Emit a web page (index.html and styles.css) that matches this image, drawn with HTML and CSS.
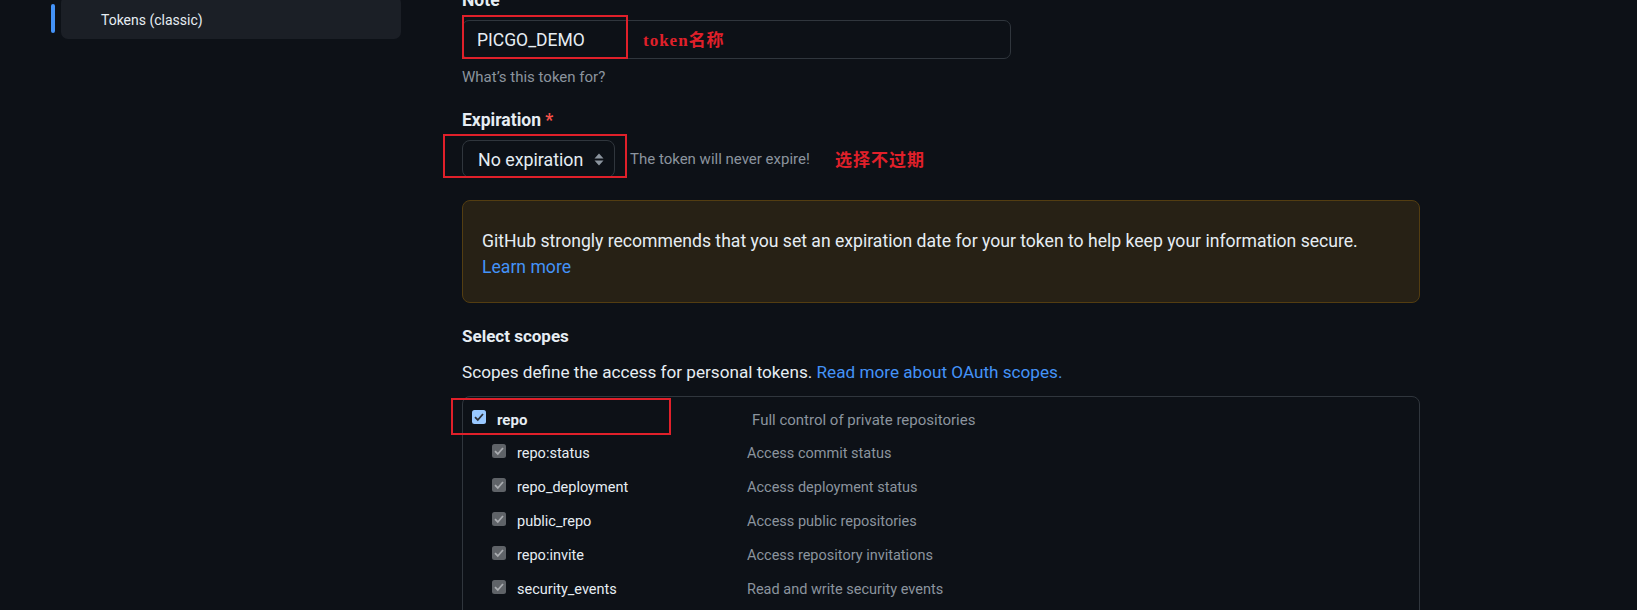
FILE: index.html
```html
<!DOCTYPE html>
<html lang="en">
<head>
<meta charset="utf-8">
<title>New personal access token (classic)</title>
<link rel="stylesheet" href="styles.css">
</head>
<body>
<div class="page">
  <aside class="sidebar">
    <div class="nav-row">
      <span class="nav-indicator"></span>
      <a class="nav-item">Tokens (classic)</a>
    </div>
  </aside>

  <main class="main">
    <div class="field">
      <label class="label">Note</label>
      <div class="input-row">
        <div class="text-input">PICGO_DEMO</div>
        <span class="annot-box box-note"></span>
        <span class="annot-text text-note"><span class="annot-latin">token</span>名称</span>
      </div>
      <p class="note">What’s this token for?</p>
    </div>

    <div class="field field-exp">
      <label class="label">Expiration <span class="required">*</span></label>
      <div class="select-row">
        <div class="select">
          <span>No expiration</span>
          <svg class="select-arrows" width="10" height="13" viewBox="0 0 10 13" aria-hidden="true">
            <path d="M5 0.5 L9.5 5.5 H0.5 Z M0.5 7.5 H9.5 L5 12.5 Z" fill="#8b949e"/>
          </svg>
        </div>
        <span class="note note-inline">The token will never expire!</span>
        <span class="annot-box box-exp"></span>
        <span class="annot-text text-exp">选择不过期</span>
      </div>
    </div>

    <div class="flash">
      GitHub strongly recommends that you set an expiration date for your token to help keep your information secure.<br>
      <a class="link">Learn more</a>
    </div>

    <h3 class="section-title">Select scopes</h3>
    <p class="section-desc">Scopes define the access for personal tokens. <a class="link">Read more about OAuth scopes.</a></p>

    <div class="scopes">
      <span class="annot-box box-repo"></span>
      <div class="scope-row scope-top">
        <span class="cb cb-on"><svg width="14" height="14" viewBox="0 0 14 14"><path d="M3 7.2 L5.8 10 L11 4" fill="none" stroke="#2b2f36" stroke-width="1.8"/></svg></span>
        <span class="scope-name">repo</span>
        <span class="scope-desc">Full control of private repositories</span>
      </div>
      <div class="scope-row scope-sub">
        <span class="cb cb-off"><svg width="14" height="14" viewBox="0 0 14 14"><path d="M3 7.2 L5.8 10 L11 4" fill="none" stroke="#a9acb0" stroke-width="1.8"/></svg></span>
        <span class="scope-name">repo:status</span>
        <span class="scope-desc">Access commit status</span>
      </div>
      <div class="scope-row scope-sub">
        <span class="cb cb-off"><svg width="14" height="14" viewBox="0 0 14 14"><path d="M3 7.2 L5.8 10 L11 4" fill="none" stroke="#a9acb0" stroke-width="1.8"/></svg></span>
        <span class="scope-name">repo_deployment</span>
        <span class="scope-desc">Access deployment status</span>
      </div>
      <div class="scope-row scope-sub">
        <span class="cb cb-off"><svg width="14" height="14" viewBox="0 0 14 14"><path d="M3 7.2 L5.8 10 L11 4" fill="none" stroke="#a9acb0" stroke-width="1.8"/></svg></span>
        <span class="scope-name">public_repo</span>
        <span class="scope-desc">Access public repositories</span>
      </div>
      <div class="scope-row scope-sub">
        <span class="cb cb-off"><svg width="14" height="14" viewBox="0 0 14 14"><path d="M3 7.2 L5.8 10 L11 4" fill="none" stroke="#a9acb0" stroke-width="1.8"/></svg></span>
        <span class="scope-name">repo:invite</span>
        <span class="scope-desc">Access repository invitations</span>
      </div>
      <div class="scope-row scope-sub">
        <span class="cb cb-off"><svg width="14" height="14" viewBox="0 0 14 14"><path d="M3 7.2 L5.8 10 L11 4" fill="none" stroke="#a9acb0" stroke-width="1.8"/></svg></span>
        <span class="scope-name">security_events</span>
        <span class="scope-desc">Read and write security events</span>
      </div>
    </div>
  </main>
</div>
</body>
</html>
```

FILE: styles.css
```css
html, body {
  margin: 0;
  padding: 0;
  background: #0d1117;
  overflow: hidden;
}

body {
  color: #e6edf3;
  font-family: Roboto, "Noto Sans CJK SC", sans-serif;
  font-size: 17px;
}

.page {
  display: flex;
  align-items: flex-start;
  gap: 61px;
  padding-left: 51px;
}

/* Sidebar */
.sidebar {
  width: 350px;
  margin-top: -4px;
}

.nav-row {
  display: flex;
  align-items: center;
  gap: 6px;
}

.nav-indicator {
  width: 4px;
  height: 29px;
  margin-top: 2px;
  border-radius: 2px;
  background: #4493f8;
}

.nav-item {
  flex: 1;
  height: 43px;
  box-sizing: border-box;
  padding: 14px 0 0 40px;
  line-height: 20px;
  font-size: 14px;
  color: #e6edf3;
  background: #1b1f26;
  border-radius: 7px;
}

/* Main form */
.main {
  width: 958px;
  margin-top: -13px;
  display: flex;
  flex-direction: column;
}

.field-exp {
  margin-top: 19px;
}

.label {
  display: block;
  font-weight: 700;
  font-size: 17.5px;
  line-height: 26px;
}

.required {
  color: #f85149;
}

.input-row,
.select-row {
  position: relative;
  margin-top: 7px;
  display: flex;
  align-items: center;
}

.text-input {
  width: 549px;
  height: 39px;
  box-sizing: border-box;
  padding-left: 14px;
  display: flex;
  align-items: center;
  font-size: 17.5px;
  border: 1px solid #30363d;
  border-radius: 7px;
  color: #e6edf3;
}

.note {
  margin: 7px 0 0;
  font-size: 15px;
  line-height: 22px;
  color: #8b949e;
}

.note-inline {
  margin: 0 0 0 15px;
}

.select {
  width: 153px;
  height: 38px;
  box-sizing: border-box;
  padding: 0 10px 0 15px;
  display: flex;
  align-items: center;
  justify-content: space-between;
  font-size: 17.8px;
  border: 1px solid #30363d;
  border-radius: 8px;
  color: #e6edf3;
}

.select-arrows {
  display: block;
}

/* Annotations drawn over the screenshot */
.annot-box {
  position: absolute;
  box-sizing: border-box;
  border: 2px solid #e0202a;
  pointer-events: none;
}

.annot-text {
  position: absolute;
  color: #e0202a;
  font-family: "Noto Sans CJK SC", sans-serif;
  font-weight: 700;
  font-size: 17px;
  letter-spacing: 1px;
  line-height: 24px;
  top: 50%;
  transform: translateY(-50%);
}

.annot-latin {
  font-family: "Liberation Serif", serif;
}

.box-note {
  left: 0;
  top: -5px;
  width: 166px;
  height: 44px;
}

.text-note {
  left: 181px;
}

.box-exp {
  left: -19px;
  top: -6px;
  width: 184px;
  height: 44px;
}

.text-exp {
  left: 373px;
}

.box-repo {
  left: -12px;
  top: 1px;
  width: 220px;
  height: 37px;
}

/* Flash */
.flash {
  margin-top: 22px;
  padding: 27px 19px 22px;
  border: 1px solid #533d11;
  border-radius: 8px;
  background: #272115;
  font-size: 17.6px;
  line-height: 26px;
  color: #e6edf3;
}

.link {
  color: #4493f8;
  text-decoration: none;
}

.section-title {
  margin: 20px 0 0;
  font-size: 17px;
  font-weight: 700;
  line-height: 26px;
}

.section-desc {
  margin: 10px 0 0;
  font-size: 17.15px;
  line-height: 26px;
}

/* Scopes list */
.scopes {
  position: relative;
  margin-top: 11px;
  padding: 6px 0 40px;
  border: 1px solid #30363d;
  border-radius: 8px;
}

.scope-row {
  display: flex;
  align-items: flex-start;
  height: 34px;
  line-height: 34px;
  font-size: 14.5px;
}

.cb {
  width: 14px;
  height: 14px;
  margin-top: 7px;
  border-radius: 2.5px;
  flex: none;
}

.cb svg {
  display: block;
}

.cb-on {
  background: #99c8ff;
}

.cb-off {
  background: #5f6368;
}

.scope-top .cb {
  margin-left: 9px;
  margin-right: 11px;
}

.scope-top .scope-name {
  width: 255px;
  font-weight: 700;
  font-size: 15px;
}

.scope-sub .cb {
  margin-left: 29px;
  margin-right: 11px;
}

.scope-sub .scope-name {
  width: 230px;
}

.scope-name {
  color: #e6edf3;
  flex: none;
}

.scope-desc {
  color: #8b949e;
}

.scope-top .scope-desc {
  font-size: 15px;
}
```
